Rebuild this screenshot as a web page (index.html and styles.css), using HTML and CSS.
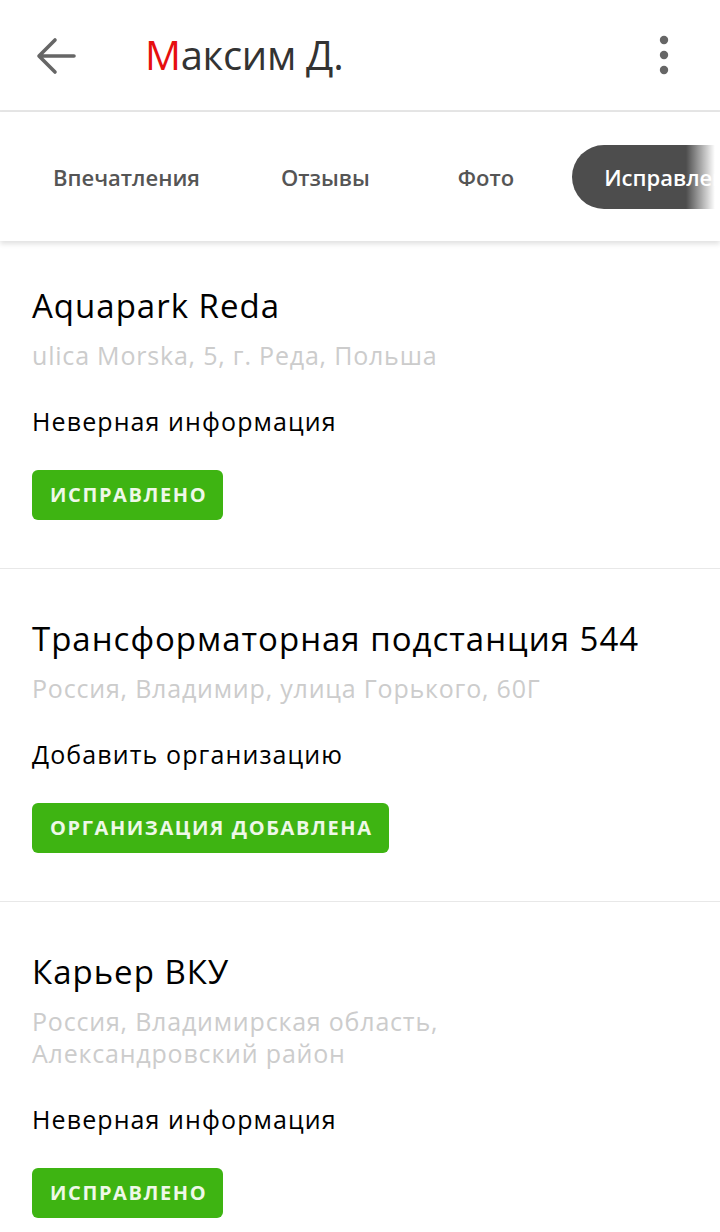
FILE: index.html
```html
<!DOCTYPE html>
<html lang="ru">
<head>
<meta charset="utf-8">
<link rel="stylesheet" href="styles.css">
</head>
<body>
<div class="page">
  <header class="topbar">
    <button class="icon-btn back" aria-label="Назад">
      <svg width="44" height="44" viewBox="0 0 44 44"><path d="M40 22H6M21 6L5 22l16 16" fill="none" stroke="#666" stroke-width="3.6" stroke-linecap="round" stroke-linejoin="round"/></svg>
    </button>
    <h1 class="title"><span class="red">М</span>аксим Д.</h1>
    <button class="icon-btn more" aria-label="Ещё">
      <svg width="12" height="44" viewBox="0 0 12 44"><circle cx="6" cy="6" r="4.2" fill="#666"/><circle cx="6" cy="21" r="4.2" fill="#666"/><circle cx="6" cy="36" r="4.2" fill="#666"/></svg>
    </button>
  </header>
  <nav class="tabs">
    <div class="tab">Впечатления</div>
    <div class="tab">Отзывы</div>
    <div class="tab">Фото</div>
    <div class="tab active">Исправления</div>
    <div class="fade"></div>
  </nav>
  <main class="list">
    <section class="card first">
      <h2 class="name">Aquapark Reda</h2>
      <p class="addr">ulica Morska, 5, г. Реда, Польша</p>
      <p class="kind">Неверная информация</p>
      <span class="status">ИСПРАВЛЕНО</span>
    </section>
    <section class="card">
      <h2 class="name">Трансформаторная подстанция 544</h2>
      <p class="addr">Россия, Владимир, улица Горького, 60Г</p>
      <p class="kind">Добавить организацию</p>
      <span class="status">ОРГАНИЗАЦИЯ ДОБАВЛЕНА</span>
    </section>
    <section class="card">
      <h2 class="name">Карьер ВКУ</h2>
      <p class="addr">Россия, Владимирская область,<br>Александровский район</p>
      <p class="kind">Неверная информация</p>
      <span class="status">ИСПРАВЛЕНО</span>
    </section>
  </main>
</div>
</body>
</html>
```
FILE: styles.css
```css
* { box-sizing: border-box; }
html, body { margin: 0; padding: 0; background: #fff; }
body { font-family: "Open Sans", "Noto Sans", sans-serif; color: #000; }
.page { width: 720px; height: 1232px; overflow: hidden; }

.topbar {
  height: 112px;
  display: flex;
  align-items: center;
  border-bottom: 2px solid #e6e6e6;
  padding: 0 50px 0 34px;
}
.icon-btn { background: none; border: 0; padding: 0; display: flex; align-items: center; }
.back { margin-top: 2px; }
.title {
  margin: 0 0 0 67px;
  flex: 1;
  font-size: 40px;
  font-weight: 400;
  color: #333;
  letter-spacing: -0.3px;
  line-height: 1;
}
.red { color: #e60f0f; }
.more { margin-top: 2px; }

.tabs {
  position: relative;
  height: 129px;
  display: flex;
  align-items: center;
  padding-left: 53px;
  white-space: nowrap;
  box-shadow: 0 3px 5px rgba(0,0,0,0.12);
  overflow: hidden;
  z-index: 1;
}
.tab {
  font-size: 22px;
  font-weight: 600;
  color: #555;
  margin-right: 81px;
}
.tab:nth-child(2) { margin-right: 88px; }
.tab:nth-child(3) { margin-right: 58px; }
.tab.active {
  background: #4d4d4d;
  color: #fff;
  height: 64px;
  line-height: 64px;
  border-radius: 32px;
  padding: 0 32px;
  margin-right: 0;
}
.fade {
  position: absolute;
  right: 0; top: 0; bottom: 0;
  width: 34px;
  background: linear-gradient(to right, rgba(255,255,255,0), #fff 85%);
}

.card {
  padding: 50px 32px 48px;
  border-bottom: 1px solid #e8e8e8;
}
.card.first { padding-top: 45px; }
.name {
  margin: 0;
  font-size: 33px;
  line-height: 40px;
  font-weight: 400;
  letter-spacing: 1px;
}
.addr {
  margin: 13px 0 0;
  font-size: 25px;
  line-height: 32px;
  color: #ccc;
  letter-spacing: 0.8px;
}
.kind {
  margin: 34px 0 0;
  font-size: 25px;
  line-height: 32px;
  letter-spacing: 1.1px;
}
.status {
  display: inline-block;
  margin-top: 33px;
  height: 50px;
  line-height: 50px;
  padding: 0 16px 0 18px;
  background: #3eb412;
  color: #eef8e8;
  border-radius: 6px;
  font-size: 20px;
  font-weight: 700;
  letter-spacing: 1.6px;
}
```
